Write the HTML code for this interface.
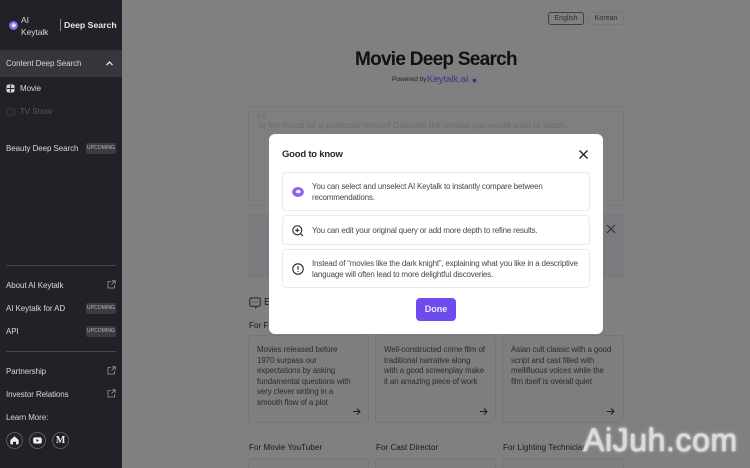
<!DOCTYPE html>
<html><head><meta charset="utf-8">
<style>
html,body{margin:0;padding:0;width:750px;height:468px;overflow:hidden;background:#808080}
#p{position:relative;width:750px;height:468px;overflow:hidden;background:#808080;font-family:"Liberation Sans",sans-serif}
.t{position:absolute;white-space:nowrap;line-height:1}
.side{position:absolute;left:0;top:0;width:122px;height:468px;background:#202227}
.side .t{color:#d6d7da;font-size:8px;letter-spacing:-.08px;transform:translateY(1px)}
.badge{position:absolute;left:86px;width:30px;height:11px;background:#3b3d43;border-radius:2px;color:#b5b6ba;font-size:5px;line-height:11px;text-align:center;letter-spacing:.05px}
.hr{position:absolute;left:6px;width:110px;height:1px;background:#45474c}
.ic{position:absolute}
.card{position:absolute;top:335px;height:88px;background:#7e7e7e;border:1px solid #767676;border-radius:3px;box-sizing:border-box}
.card2{position:absolute;top:458px;height:10px;background:#7e7e7e;border:1px solid #767676;border-bottom:0;border-radius:3px 3px 0 0;box-sizing:border-box}
.cardt{color:#2a2c33;font-size:8px;letter-spacing:-.13px;line-height:10.5px;position:absolute;white-space:nowrap}
.head{color:#16171a;font-size:8px;letter-spacing:.08px}
.modal{position:absolute;left:269px;top:134px;width:334px;height:200px;background:#fff;border-radius:6px}
.row{position:absolute;left:13px;width:308px;background:#fff;border:1px solid #e8eaee;border-radius:4px;box-sizing:border-box}
.rt{position:absolute;left:29px;color:#414755;font-size:8px;letter-spacing:-.19px;line-height:11px;white-space:nowrap}
</style></head>
<body><div id="p">
<div class="side">
  <svg class="ic" style="left:9px;top:21px" width="9" height="9" viewBox="0 0 9 9"><circle cx="4.5" cy="4.5" r="4.4" fill="#8b6cf0"/><circle cx="4.7" cy="4.3" r="2.1" fill="#e8e4fb"/></svg>
  <div class="t" style="left:21px;top:13px;font-size:8.5px;line-height:12px">AI<br>Keytalk</div>
  <div style="position:absolute;left:60px;top:19px;width:1px;height:12px;background:#8a8b8f"></div>
  <div class="t" style="left:64px;top:20px;font-size:8.7px;font-weight:700;color:#e6e7e9;letter-spacing:0">Deep Search</div>

  <div style="position:absolute;left:0;top:50px;width:122px;height:27px;background:#35373d"></div>
  <div class="t" style="left:6px;top:59px">Content Deep Search</div>
  <svg class="ic" style="left:105px;top:60px" width="9" height="7" viewBox="0 0 9 7"><path d="M1.5 5L4.5 2L7.5 5" fill="none" stroke="#e6e7e9" stroke-width="1.3"/></svg>

  <svg class="ic" style="left:6px;top:84px" width="9" height="9" viewBox="0 0 9 9"><rect x=".5" y=".5" width="8" height="8" rx="2" fill="#d0d1d4"/><path d="M4.5 1V8M1 4.5H8" stroke="#202227" stroke-width=".9"/></svg>
  <div class="t" style="left:20px;top:84px">Movie</div>
  <svg class="ic" style="left:6px;top:107px" width="9" height="9" viewBox="0 0 9 9"><rect x=".5" y="2" width="8" height="6" rx="1.5" fill="none" stroke="#3a3c41"/></svg>
  <div class="t" style="left:20px;top:107px;color:#55575c">TV Show</div>

  <div class="t" style="left:6px;top:144px">Beauty Deep Search</div>
  <div class="badge" style="top:143px">UPCOMING</div>

  <div class="hr" style="top:265px"></div>
  <div class="t" style="left:6px;top:281px">About AI Keytalk</div>
  <svg class="ic" style="left:107px;top:280px" width="9" height="9" viewBox="0 0 9 9"><path d="M4 1.5H1V8H7.5V5M5 .8H8.2V4M8 1L4.5 4.5" fill="none" stroke="#9a9ca0" stroke-width=".8"/></svg>
  <div class="t" style="left:6px;top:304px">AI Keytalk for AD</div>
  <div class="badge" style="top:303px">UPCOMING</div>
  <div class="t" style="left:6px;top:327px">API</div>
  <div class="badge" style="top:326px">UPCOMING</div>
  <div class="hr" style="top:351px"></div>
  <div class="t" style="left:6px;top:367px">Partnership</div>
  <svg class="ic" style="left:107px;top:366px" width="9" height="9" viewBox="0 0 9 9"><path d="M4 1.5H1V8H7.5V5M5 .8H8.2V4M8 1L4.5 4.5" fill="none" stroke="#9a9ca0" stroke-width=".8"/></svg>
  <div class="t" style="left:6px;top:390px">Investor Relations</div>
  <svg class="ic" style="left:107px;top:389px" width="9" height="9" viewBox="0 0 9 9"><path d="M4 1.5H1V8H7.5V5M5 .8H8.2V4M8 1L4.5 4.5" fill="none" stroke="#9a9ca0" stroke-width=".8"/></svg>
  <div class="t" style="left:6px;top:413px">Learn More:</div>

  <svg class="ic" style="left:6px;top:432px" width="17" height="17" viewBox="0 0 17 17"><circle cx="8.5" cy="8.5" r="8" fill="none" stroke="#66686c" stroke-width=".8"/><path d="M8.5 4.3L12.6 8V12.4H10V9.7H7V12.4H4.4V8Z" fill="#eeeff0"/></svg>
  <svg class="ic" style="left:29px;top:432px" width="17" height="17" viewBox="0 0 17 17"><circle cx="8.5" cy="8.5" r="8" fill="none" stroke="#66686c" stroke-width=".8"/><rect x="4.2" y="5.4" width="8.6" height="6.2" rx="1.8" fill="#eeeff0"/><path d="M7.5 7V10L10 8.5Z" fill="#202227"/></svg>
  <svg class="ic" style="left:52px;top:432px" width="17" height="17" viewBox="0 0 17 17"><circle cx="8.5" cy="8.5" r="8" fill="none" stroke="#66686c" stroke-width=".8"/></svg>
  <div class="t" style="left:52px;top:435px;width:17px;text-align:center;font-family:'Liberation Serif',serif;font-weight:700;font-size:10px;color:#eeeff0">M</div>
</div>

<div class="t" style="left:548px;top:12px;width:36px;height:13px;box-sizing:border-box;border:1px solid #3e4045;border-radius:3px;text-align:center;font-size:7px;line-height:11px;color:#2c2e33">English</div>
<div class="t" style="left:588px;top:12px;width:36px;height:13px;box-sizing:border-box;border:1px solid #777;border-radius:3px;text-align:center;font-size:7px;line-height:11px;color:#2c2e33">Korean</div>
<div class="t" style="left:355px;top:50px;font-size:19px;font-weight:700;letter-spacing:-.73px;color:#101114">Movie Deep Search</div>
<div class="t" style="left:392px;top:77px;font-size:6.7px;letter-spacing:-.1px;color:#202126">Powered by</div>
<div class="t" style="left:427px;top:75px;font-size:9.5px;color:#4f3f8c;-webkit-text-stroke:.2px #4f3f8c">Keytalk.ai</div>
<svg class="ic" style="left:470px;top:76px" width="9" height="9" viewBox="0 0 9 9"><circle cx="4.5" cy="4.5" r="4" fill="#7b7b84"/><circle cx="4.5" cy="4.5" r="1.7" fill="#35304f"/></svg>

<div style="position:absolute;left:248px;top:106px;width:376px;height:100px;box-sizing:border-box;border:1px solid #777;border-radius:3px;background:#7f7f7f"></div>
<div class="t" style="left:259px;top:121px;font-size:8.3px;color:#6b6b6b;letter-spacing:.1px">In the mood for a particular movie? Describe the movies you would want to watch.</div>
<div class="t" style="left:256px;top:109px;font-family:'Liberation Serif',serif;font-size:26px;color:#747474">“</div>

<div style="position:absolute;left:248px;top:214px;width:376px;height:64px;border-radius:3px;background:#7a7a7f"></div>
<svg class="ic" style="left:606px;top:224px" width="10" height="10" viewBox="0 0 10 10"><path d="M1 1L9 9M9 1L1 9" stroke="#2a2b30" stroke-width="1"/></svg>

<svg class="ic" style="left:249px;top:297px" width="12" height="12" viewBox="0 0 12 12"><path d="M2 1H10Q11.2 1 11.2 2.2V8Q11.2 9.2 10 9.2H8L6.8 11L6 9.2H2Q.8 9.2 .8 8V2.2Q.8 1 2 1Z" fill="none" stroke="#222" stroke-width="1"/><path d="M3.5 5H4.3M5.6 5H6.4M7.7 5H8.5" stroke="#222"/></svg>
<div class="t" style="left:264px;top:298px;font-size:10px;color:#1a1b1e">E</div>
<div class="t head" style="left:249px;top:322px">For Film Critics</div>

<div class="card" style="left:248px;width:121px"></div>
<div class="card" style="left:375px;width:121px"></div>
<div class="card" style="left:502px;width:122px"></div>
<div class="cardt" style="left:257px;top:345px">Movies released before<br>1970 surpass our<br>expectations by asking<br>fundamental questions with<br>very clever writing in a<br>smooth flow of a plot</div>
<div class="cardt" style="left:384px;top:345px">Well-constructed crime film of<br>traditional narrative along<br>with a good screenplay make<br>it an amazing piece of work</div>
<div class="cardt" style="left:511px;top:345px">Asian cult classic with a good<br>script and cast filled with<br>mellifluous voices while the<br>film itself is overall quiet</div>
<svg class="ic" style="left:352px;top:407px" width="9" height="9" viewBox="0 0 9 9"><path d="M1 4.5H8M5 1.5L8 4.5L5 7.5" fill="none" stroke="#1d1e22"/></svg>
<svg class="ic" style="left:479px;top:407px" width="9" height="9" viewBox="0 0 9 9"><path d="M1 4.5H8M5 1.5L8 4.5L5 7.5" fill="none" stroke="#1d1e22"/></svg>
<svg class="ic" style="left:606px;top:407px" width="9" height="9" viewBox="0 0 9 9"><path d="M1 4.5H8M5 1.5L8 4.5L5 7.5" fill="none" stroke="#1d1e22"/></svg>

<div class="t head" style="left:249px;top:444px">For Movie YouTuber</div>
<div class="t head" style="left:376px;top:444px">For Cast Director</div>
<div class="t head" style="left:503px;top:444px">For Lighting Technician</div>
<div class="card2" style="left:248px;width:121px"></div>
<div class="card2" style="left:375px;width:121px"></div>
<div class="card2" style="left:502px;width:122px"></div>

<div class="modal">
  <div class="t" style="left:13px;top:16px;font-size:9.5px;letter-spacing:-.22px;font-weight:700;color:#23252b">Good to know</div>
  <svg class="ic" style="left:309px;top:15px" width="11" height="11" viewBox="0 0 11 11"><path d="M1.5 1.5L9.5 9.5M9.5 1.5L1.5 9.5" stroke="#23252b" stroke-width="1.4"/></svg>

  <div class="row" style="top:38px;height:39px">
    <svg class="ic" style="left:9px;top:13px" width="12" height="12" viewBox="0 0 12 12"><ellipse cx="6" cy="6" rx="5.8" ry="5" fill="#8b63e8"/><ellipse cx="6.3" cy="5.6" rx="2.6" ry="1.8" fill="#efe8fd"/></svg>
    <div class="rt" style="top:8px">You can select and unselect AI Keytalk to instantly compare between<br>recommendations.</div>
  </div>
  <div class="row" style="top:81px;height:30px">
    <svg class="ic" style="left:9px;top:9px" width="12" height="12" viewBox="0 0 12 12"><circle cx="5.3" cy="5.3" r="4.5" fill="none" stroke="#23252b" stroke-width="1.1"/><path d="M8.6 8.6L11 11M3.3 5.3H7.3M5.3 3.3V7.3" fill="none" stroke="#23252b" stroke-width="1.1"/></svg>
    <div class="rt" style="top:9px">You can edit your original query or add more depth to refine results.</div>
  </div>
  <div class="row" style="top:115px;height:39px">
    <svg class="ic" style="left:9px;top:13px" width="12" height="12" viewBox="0 0 12 12"><circle cx="6" cy="6" r="5.2" fill="none" stroke="#23252b" stroke-width="1.1"/><path d="M6 3V6.8M6 8V9" stroke="#23252b" stroke-width="1.1"/></svg>
    <div class="rt" style="top:8px">Instead of “movies like the dark knight”, explaining what you like in a descriptive<br>language will often lead to more delightful discoveries.</div>
  </div>
  <div style="position:absolute;left:147px;top:164px;width:40px;height:23px;background:#6d4bec;border-radius:4px;color:#e9e4fd;font-size:9px;font-weight:700;line-height:23px;text-align:center">Done</div>
</div>

<div class="t" style="left:583px;top:424px;font-size:32px;color:#dcdcdc;letter-spacing:.6px;text-shadow:0 0 3px #f4f4f4,0 0 1px #fff">AiJuh.com</div>
</div></body></html>
